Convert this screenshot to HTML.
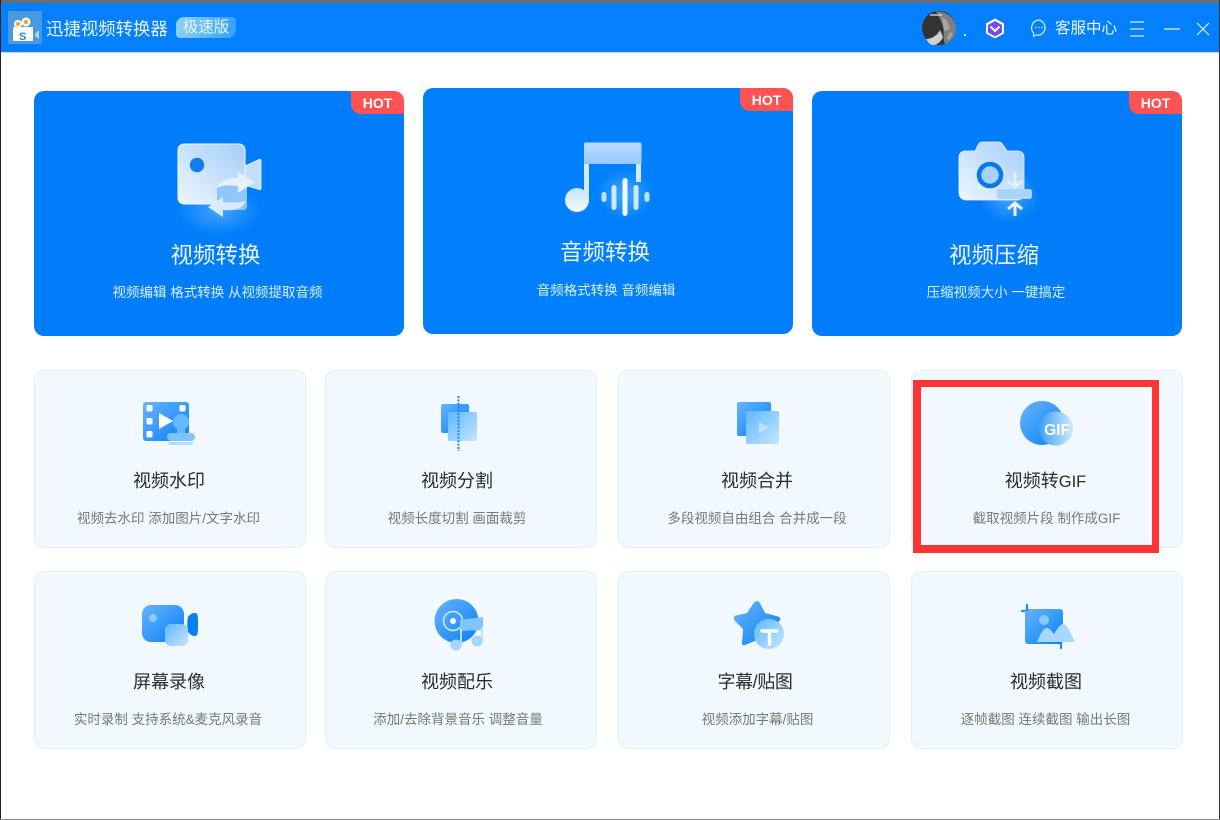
<!DOCTYPE html>
<html lang="zh"><head><meta charset="utf-8"><title>迅捷视频转换器</title>
<style>
*{box-sizing:border-box;margin:0;padding:0}
html,body{width:1220px;height:820px;overflow:hidden;background:#fff;font-family:"Liberation Sans","Noto Sans CJK SC",sans-serif}
.a{position:absolute}
#page{position:relative;width:1220px;height:820px;background:#fff;overflow:hidden;filter:blur(.3px)}
.big{position:absolute;width:370px;height:245px;background:#017dfa;border-radius:10px;color:#fff;text-align:center}
.big .t{position:absolute;left:0;right:0;top:147.500px;font-size:22.500px;line-height:34px;color:#eaf5ff}
.big .d{position:absolute;left:0;right:0;top:193px;font-size:13.500px;line-height:18px;color:#dcefff}
.hot{position:absolute;right:0;top:0;width:53px;height:23px;background:#ff5252;border-radius:0 10px 0 10px;font:700 14px/24px "Liberation Sans",sans-serif;color:#fff;text-align:center}
.sm{position:absolute;width:272px;height:178px;background:#f1f9ff;border:1px solid #dff0fd;border-radius:10px;text-align:center}
.sm .t{position:absolute;left:0;right:0;top:97px;font-size:18px;line-height:26px;color:#2b2b2b}
.sm .d{position:absolute;left:0;right:0;top:139px;font-size:13.500px;line-height:18px;color:#777}
svg{position:absolute;overflow:visible}
</style></head><body><div id="page">
<svg width="0" height="0" style="position:absolute"><defs>
<linearGradient id="w1" x1="1" y1="0" x2="0" y2="1"><stop offset="0" stop-color="#a3cdf9"/><stop offset="1" stop-color="#eef7ff"/></linearGradient>
<linearGradient id="w2" x1="0" y1="0" x2="0" y2="1"><stop offset="0" stop-color="#b9dbfd"/><stop offset="1" stop-color="#96c9fc"/></linearGradient>
<linearGradient id="w3" x1="0" y1="0" x2="0" y2="1"><stop offset="0" stop-color="#c8e3fd"/><stop offset="1" stop-color="#f4faff"/></linearGradient>
<linearGradient id="b1" x1="0" y1="0" x2="1" y2="1"><stop offset="0" stop-color="#68b4fb"/><stop offset="1" stop-color="#0580f6"/></linearGradient>
<linearGradient id="l1" x1="0" y1="0" x2="1" y2="1"><stop offset="0" stop-color="#5db8ff"/><stop offset="1" stop-color="#c6e6fe"/></linearGradient>
<linearGradient id="g1" x1="0" y1=".5" x2="1" y2=".5"><stop offset="0" stop-color="#3d9ff8"/><stop offset="1" stop-color="#cfe9ff"/></linearGradient>
<radialGradient id="gl"><stop offset="0" stop-color="#5cb0ff" stop-opacity=".75"/><stop offset="1" stop-color="#5cb0ff" stop-opacity="0"/></radialGradient>
</defs></svg>

<!-- header -->
<div class="a" style="left:0;top:0;width:1220px;height:3px;background:#6d6d6d"></div>
<div class="a" style="left:0;top:3px;width:1220px;height:49px;background:#0480fd"></div>
<div class="a" style="left:0;top:52px;width:1220px;height:1px;background:#b5dcff"></div>
<div class="a" style="left:0;top:0;width:1px;height:820px;background:#222"></div>
<div class="a" style="right:0;top:0;width:1px;height:820px;background:#333"></div>
<div class="a" style="left:0;bottom:0;width:1220px;height:1px;background:#888"></div>

<svg style="left:8px;top:11px" width="34" height="33" viewBox="0 0 34 33">
<rect width="34" height="33" fill="#4a98dd"/>
<path d="M5 16h20v14H5z" fill="#fff"/><path d="M27 23l4-4v9l-4-3z" fill="#a9d4f7"/>
<circle cx="10" cy="13" r="4" fill="#fff"/><circle cx="18" cy="11" r="4.500" fill="#fff"/><circle cx="18" cy="11" r="2.200" fill="#f6a623"/><circle cx="10" cy="13" r="2" fill="#f6a623"/>
<text x="11" y="29" font-size="11" font-weight="700" fill="#1f86e8" font-family="Liberation Sans">S</text>
</svg>
<div class="a" style="left:46px;top:15px;font-size:17.400px;line-height:28px;color:#eaf5ff;white-space:nowrap">迅捷视频转换器</div>
<div class="a" style="left:176px;top:17px;width:60px;height:21px;background:linear-gradient(100deg,#8ed4fb,#2f9ffc);border-radius:8px 4px 8px 4px;font-size:15.500px;line-height:21px;text-align:center;color:#e8f6ff">极速版</div>

<svg style="left:922px;top:11px" width="34" height="34" viewBox="0 0 34 34">
<circle cx="17" cy="17" r="17" fill="#333"/>
<path d="M14 .5C24 0 34 7 34 17c0 8-5 14-11 16-3-6 0-11-2-17-1-5-4-10-7-15.500z" fill="#7f7f7f"/>
<path d="M20 6l5 3 3 9-6 2zM28 21l3 2-4 6-2-2z" fill="#a5a5a5"/>
<path d="M4 28c5 0 11-3 14-9l3 7c-2 5-6 8-10 8-3 0-5-3-7-6z" fill="#d0d0d0"/>
<path d="M8 4h12" stroke="#ddd" stroke-width="1.300"/>
</svg>
<div class="a" style="left:964px;top:34px;width:2px;height:2px;background:#e6f3ff"></div>
<svg style="left:985px;top:18px" width="20" height="21" viewBox="0 0 20 21">
<path d="M10 .5l9 5v10l-9 5-9-5v-10z" fill="#fff"/><path d="M10 3l7 4v7.500l-7 4-7-4V7z" fill="#6c4cf5"/>
<path d="M5.500 8.500l4.500 4.500 4.500-4.500" fill="none" stroke="#fff" stroke-width="2"/>
</svg>
<svg style="left:1030px;top:19px" width="18" height="18" viewBox="0 0 18 18">
<path d="M9 1a7.800 7.800 0 0 1 0 15.200c-1 0-1.800-.1-2.600-.4L3.500 17.300l.2-3.200A7.800 7.800 0 0 1 9 1z" fill="none" stroke="#cfe8ff" stroke-width="1.200"/>
<circle cx="6" cy="8.500" r=".8" fill="#cfe8ff"/><circle cx="9" cy="8.500" r=".8" fill="#cfe8ff"/><circle cx="12" cy="8.500" r=".8" fill="#cfe8ff"/>
</svg>
<div class="a" style="left:1055px;top:18px;font-size:15.500px;line-height:22px;color:#eaf5ff;white-space:nowrap">客服中心</div>
<svg style="left:1129px;top:21px" width="16" height="16" viewBox="0 0 16 16"><path d="M1 1h14M1 8h14M1 15h14" stroke="#d8ecff" stroke-width="1.200"/></svg>
<svg style="left:1164px;top:21px" width="18" height="16" viewBox="0 0 18 16"><path d="M0 8h16" stroke="#e6f3ff" stroke-width="1.300"/></svg>
<svg style="left:1196px;top:22px" width="14" height="14" viewBox="0 0 14 14"><path d="M1 1l12 12M13 1L1 13" stroke="#e6f3ff" stroke-width="1.200"/></svg>

<!-- big cards -->
<div class="big" style="left:34px;top:91px">
<div class="hot">HOT</div>
<svg style="left:143px;top:50px" width="86" height="78" viewBox="0 0 86 78">
<ellipse cx="42" cy="70" rx="42" ry="24" fill="url(#gl)"/>
<path d="M68 25l14-6.500c1.500-.5 2 0 2 1.500v27c0 1.500-.5 2-2 1.500L68 44z" fill="#c3dffb" stroke="#f2f9ff" stroke-width=".8"/>
<rect x="1" y="3" width="67" height="60" rx="6" fill="url(#w1)" stroke="#f2f9ff" stroke-width="1"/>
<circle cx="20" cy="24" r="7.200" fill="#0f7df0"/>
<rect x="40" y="42" width="30" height="27" rx="4" fill="#8fc6fb"/>
<path d="M39 47C44 38 52 37 61 37V31L78 41 61 52V45C53 44 46 44 39 47z" fill="#e4f2ff"/>
<path d="M69 58C68 62 58 62 46 61V56L31 66 46 76V69C58 70 67 68 69 58z" fill="#d8ebff"/>
</svg>
<div class="t" style="transform:translateX(-3.500px)">视频转换</div><div class="d" style="transform:translateX(-1.500px)">视频编辑 格式转换 从视频提取音频</div>
</div>

<div class="big" style="left:423px;top:88px;background:#0080fd;height:246px">
<div class="hot">HOT</div>
<svg style="left:142px;top:54px" width="88" height="74" viewBox="0 0 88 74">
<ellipse cx="60" cy="52" rx="28" ry="26" fill="url(#gl)"/>
<path d="M20 .5h55a1.500 1.500 0 0 1 1.500 1.500v20H19V2a1.500 1.500 0 0 1 1-1.500z" fill="url(#w2)"/>
<path d="M19 22h5v36h-5zM71 22h5v18h-5z" fill="#d4e9ff"/>
<circle cx="12" cy="58" r="12" fill="url(#w3)"/>
<rect x="36.500" y="50" width="5" height="10" rx="2.500" fill="#bfe0ff"/>
<rect x="46.500" y="43" width="5" height="25" rx="2.500" fill="#cfe8ff"/>
<rect x="57.500" y="36" width="5" height="38" rx="2.500" fill="#f0f8ff"/>
<rect x="68.500" y="43" width="5" height="25" rx="2.500" fill="#cfe8ff"/>
<rect x="79.500" y="50" width="5" height="10" rx="2.500" fill="#bfe0ff"/>
</svg>
<div class="t" style="transform:translateX(-3px)">音频转换</div><div class="d" style="transform:translateX(-2px);top:194px">音频格式转换 音频编辑</div>
</div>

<div class="big" style="left:812px;top:91px">
<div class="hot">HOT</div>
<svg style="left:147px;top:50px" width="76" height="78" viewBox="0 0 76 78">
<ellipse cx="50" cy="56" rx="30" ry="26" fill="url(#gl)"/>
<path d="M6 10h10l3-6c1-1.800 2-3 4-3h17c2 0 3 1.200 4 3l4 6h11a6 6 0 0 1 6 6v36a7 7 0 0 1-7 7H7a7 7 0 0 1-7-7V16a6 6 0 0 1 6-6z" fill="url(#w1)" stroke="#eef7ff" stroke-width=".8"/>
<circle cx="31" cy="34" r="11" fill="#a7d1fb" stroke="#0a78ec" stroke-width="4.500"/>
<path d="M56 31v15M49 40l7 6 7-6" fill="none" stroke="#e0f0ff" stroke-width="3"/>
<rect x="38" y="48" width="35" height="10" rx="2.500" fill="#a8d4fd"/>
<path d="M56 75V62M49 68l7-6 7 6" fill="none" stroke="#e9f5ff" stroke-width="3"/>
</svg>
<div class="t" style="transform:translateX(-3px)">视频压缩</div><div class="d" style="transform:translateX(-1px)">压缩视频大小 一键搞定</div>
</div>

<!-- row 1 -->
<div class="sm" style="left:34px;top:370px">
<svg style="left:108px;top:31px" width="54" height="46" viewBox="0 0 54 46">
<rect x="0" y="0" width="46" height="39" rx="3" fill="url(#b1)"/>
<rect x="3.500" y="3" width="6" height="6.500" rx="1.500" fill="#fff"/><rect x="3.500" y="16" width="6" height="6.500" rx="1.500" fill="#fff"/><rect x="3.500" y="29" width="6" height="6.500" rx="1.500" fill="#fff"/>
<rect x="36.500" y="3" width="6" height="6.500" rx="1.500" fill="#fff"/>
<path d="M16 11l14 8-14 8z" fill="#fff"/>
<circle cx="38" cy="20" r="8" fill="#66baff"/><path d="M34 24h8v8h-8z" fill="#66baff"/>
<rect x="24" y="31" width="28" height="8" rx="4" fill="#7cc4fe"/>
<rect x="25" y="40" width="25" height="3" rx="1.500" fill="#b3dcfd"/>
</svg>
<div class="t" style="transform:translateX(-1px)">视频水印</div><div class="d" style="transform:translateX(-1.500px)">视频去水印 添加图片/文字水印</div>
</div>
<div class="sm" style="left:325px;top:370px">
<svg style="left:114px;top:24px" width="40" height="58" viewBox="0 0 40 58">
<rect x="1" y="9" width="28" height="29" rx="2" fill="url(#b1)"/>
<rect x="8" y="17" width="29" height="29" rx="2" fill="url(#l1)"/>
<path d="M18.500 1v55" stroke="#1585f5" stroke-width="2" stroke-dasharray="2 1.400"/>
</svg>
<div class="t" style="transform:translateX(-4px)">视频分割</div><div class="d" style="transform:translateX(-4px)">视频长度切割 画面裁剪</div>
</div>
<div class="sm" style="left:618px;top:370px">
<svg style="left:118px;top:31px" width="44" height="44" viewBox="0 0 44 44">
<rect x="0" y="0" width="34" height="34" rx="2" fill="url(#b1)"/>
<rect x="9" y="9" width="33" height="33" rx="2" fill="url(#l1)"/>
<path d="M22 20l10 5.500-10 5.500z" fill="#bde2fd"/>
</svg>
<div class="t" style="transform:translateX(3px)">视频合并</div><div class="d" style="transform:translateX(3px)">多段视频自由组合 合并成一段</div>
</div>
<div class="sm" style="left:911px;top:370px">
<svg style="left:108px;top:30px" width="54" height="46" viewBox="0 0 54 46">
<circle cx="22" cy="22" r="22" fill="url(#b1)"/>
<circle cx="36" cy="27.500" r="17" fill="url(#g1)"/>
<text x="37" y="34" text-anchor="middle" font-family="Liberation Sans" font-size="15.500" font-weight="700" fill="#fff">GIF</text>
</svg>
<div class="t" style="transform:translateX(-1.500px)">视频转<span style="font-size:16.500px">GIF</span></div><div class="d" style="transform:translateX(-.5px)">截取视频片段 制作成GIF</div>
</div>

<!-- row 2 -->
<div class="sm" style="left:34px;top:571px">
<svg style="left:106px;top:32px" width="58" height="44" viewBox="0 0 58 44">
<rect x="1" y="1" width="42" height="37" rx="9" fill="url(#b1)"/>
<circle cx="12" cy="14" r="4" fill="#8fc8fb"/>
<path d="M47 13c3-4 7-5 9-3 1.500 1 1.500 20 0 21-2 2-6 1-9-3-1-4-1-11 0-15z" fill="#0880f4"/>
<rect x="24" y="20" width="23" height="22" rx="6" fill="url(#l1)"/>
</svg>
<div class="t" style="transform:translateX(-1px)">屏幕录像</div><div class="d" style="transform:translateX(-2px)">实时录制 支持系统&amp;麦克风录音</div>
</div>
<div class="sm" style="left:325px;top:571px">
<svg style="left:109px;top:27px" width="50" height="52" viewBox="0 0 50 52">
<circle cx="21.500" cy="22" r="22" fill="url(#b1)"/>
<circle cx="18" cy="22" r="9.500" fill="none" stroke="#cfe8ff" stroke-width="1.600"/>
<circle cx="18" cy="22" r="5" fill="#3e9cf8"/><circle cx="18" cy="22" r="3" fill="#fff"/>
<path d="M25 21l23-3v13l-23 1z" fill="#7fc4fe"/><path d="M25 30h2v16h-2zM46 28h2v14h-2z" fill="#bde2fd"/>
<circle cx="21" cy="46" r="5.500" fill="#a6d6fd"/><circle cx="42" cy="42" r="5.500" fill="#a6d6fd"/>
</svg>
<div class="t" style="transform:translateX(-4px)">视频配乐</div><div class="d" style="transform:translateX(-3px)">添加/去除背景音乐 调整音量</div>
</div>
<div class="sm" style="left:618px;top:571px">
<svg style="left:113px;top:28px" width="54" height="50" viewBox="0 0 54 50">
<path d="M25 1c1.500 0 2.500 1 3.500 3l4.500 9 13 3.500c3 1 3 3 1 5L38 30l1 12c0 3-2 4-4 3l-10-5-12 5c-2 1-3 0-3-2l1-14-8-8c-2-3-1-5 1-5.500L15 13l6-9c1.500-2 2.500-3 4-3z" fill="url(#b1)"/>
<circle cx="37" cy="34" r="15" fill="url(#l1)"/>
<path d="M30 31h15M37.500 31v13" stroke="#fff" stroke-width="3.400" stroke-linecap="round"/>
</svg>
<div class="t" style="transform:translateX(1px);letter-spacing:-.4px">字幕/贴图</div><div class="d" style="transform:translateX(3.500px)">视频添加字幕/贴图</div>
</div>
<div class="sm" style="left:911px;top:571px">
<svg style="left:106px;top:32px" width="58" height="46" viewBox="0 0 58 46">
<path d="M7 5h35a3 3 0 0 1 3 3v29a3 3 0 0 1-3 3H10a3 3 0 0 1-3-3z" fill="url(#b1)"/>
<path d="M9 1v5M4 7h2M43 40v4" stroke="#178cf5" stroke-width="2.200" stroke-linecap="round"/>
<circle cx="26" cy="16" r="5" fill="#86cbff"/>
<path d="M19 38c3-7 6-14 10-14 3 0 5 4 7 6 3-5 6-10 9-10 3 0 5 4 12 18z" fill="#a5d8fe"/>
</svg>
<div class="t" style="transform:translateX(-1px)">视频截图</div><div class="d" style="transform:translateX(-1.500px)">逐帧截图 连续截图 输出长图</div>
</div>

<!-- red highlight -->
<div class="a" style="left:913px;top:380px;width:245.500px;height:173px;border-style:solid;border-color:#fe3333;border-width:7px 7px 8px 8px"></div>
</div></body></html>
